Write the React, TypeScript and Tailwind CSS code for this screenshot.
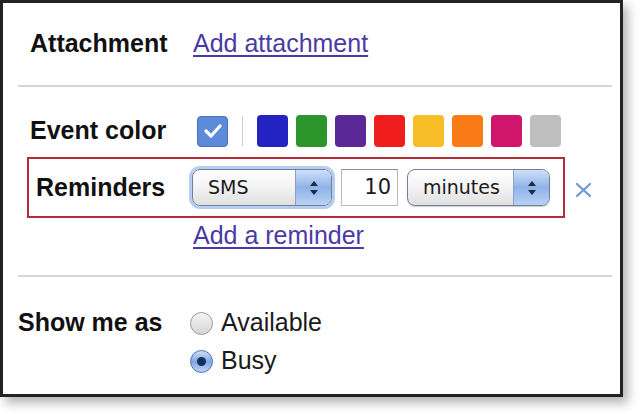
import React from 'react';

const swatches = ['#2323c2', '#2c962c', '#5c2797', '#ef1d1d', '#f8be28', '#f87b15', '#d0156d', '#bfbfbf'];

const Arrows: React.FC = () => (
  <svg width="10" height="16" viewBox="0 0 10 16">
    <path d="M5 1 L9 6 H1 Z" fill="#1c2a44" />
    <path d="M5 15 L9 10 H1 Z" fill="#1c2a44" />
  </svg>
);

const MacSelect: React.FC<{ label: string; width: string; focused?: boolean }> = ({ label, width, focused }) => (
  <div
    className={`${width} h-[37px] flex rounded-[8px] border border-[#6f7f9c] overflow-hidden bg-gradient-to-b from-white via-[#f3f3f3] to-[#e0e0e0] ${
      focused ? 'shadow-[0_0_0_3px_#b4cdf0]' : 'shadow-[0_1px_1px_rgba(0,0,0,0.2)]'
    }`}
  >
    <div className="flex-1 flex items-center pl-[15px] text-[19px] text-[#1a1a1a] font-['DejaVu_Sans',sans-serif]">{label}</div>
    <div className="w-[36px] flex items-center justify-center bg-gradient-to-b from-[#cfe0f8] via-[#8fb3e8] to-[#b9d2f5] border-l border-[#8aa0c4]">
      <Arrows />
    </div>
  </div>
);

const Radio: React.FC<{ checked?: boolean; label: string }> = ({ checked, label }) => (
  <div className="h-[38px] flex items-center gap-[8px]">
    {checked ? (
      <div className="w-[23px] h-[23px] rounded-full border border-[#4f74ad] bg-gradient-to-b from-[#cfe0f8] via-[#7ea7e2] to-[#bcd4f5] flex items-center justify-center">
        <div className="w-[9px] h-[9px] rounded-full bg-[#17305a]" />
      </div>
    ) : (
      <div className="w-[23px] h-[23px] rounded-full border border-[#9a9a9a] bg-gradient-to-b from-[#f4f4f4] to-[#d6d6d6]" />
    )}
    <span className="text-[25px] text-[#1a1a1a]">{label}</span>
  </div>
);

export default function App() {
  return (
    <div className="w-[640px] h-[414px] bg-white font-['Liberation_Sans',Arial,sans-serif] overflow-hidden">
      <div className="w-[623px] h-[397px] border-[3px] border-[#232323] bg-white shadow-[5px_6px_10px_rgba(0,0,0,0.3)] flex flex-col">
        <div className="h-[82px] flex items-center pl-[27px]">
          <span className="w-[163px] text-[25px] font-bold text-[#111]">Attachment</span>
          <a className="text-[25px] text-[#4b3aa6] underline underline-offset-[3px]">Add attachment</a>
        </div>
        <div className="h-[2px] bg-[#d6d6d6] ml-[15px] mr-[8px]" />

        <div className="h-[70px] pt-[18px] flex items-center pl-[27px]">
          <span className="w-[167px] text-[25px] font-bold text-[#111]">Event color</span>
          <div className="w-[31px] h-[31px] rounded-[4px] bg-[#5d8bd9] border border-[#4a72bb] flex items-center justify-center">
            <svg width="20" height="16" viewBox="0 0 20 16">
              <path d="M3 8 L8 13 L17 3" stroke="white" strokeWidth="3.2" fill="none" strokeLinecap="round" strokeLinejoin="round" />
            </svg>
          </div>
          <div className="w-px h-[30px] bg-[#cfcfcf] mx-[14px]" />
          <div className="flex gap-[8px]">
            {swatches.map((c) => (
              <div key={c} className="w-[31px] h-[32px] rounded-[4px]" style={{ backgroundColor: c }} />
            ))}
          </div>
        </div>

        <div className="flex items-center ml-[24px]">
          <div className="w-[538px] h-[61px] border-2 border-[#b92a38] flex items-center pl-[7px]">
            <span className="w-[156px] text-[25px] font-bold text-[#111]">Reminders</span>
            <MacSelect label="SMS" width="w-[140px]" focused />
            <div className="ml-[9px] w-[57px] h-[37px] border border-[#b9b9b9] border-t-[#8e8e8e] bg-white flex items-center justify-end pr-[6px] text-[21px] text-[#1a1a1a] font-['DejaVu_Sans',sans-serif]">
              10
            </div>
            <div className="ml-[9px]">
              <MacSelect label="minutes" width="w-[143px]" />
            </div>
          </div>
          <svg className="ml-[10px] mt-[5px]" width="17" height="16" viewBox="0 0 17 16">
            <path d="M2 2 L15 14 M15 2 L2 14" stroke="#6d97cf" strokeWidth="2.2" strokeLinecap="round" />
          </svg>
        </div>

        <div className="h-[36px] flex items-center pl-[190px]">
          <a className="text-[25px] text-[#4b3aa6] underline underline-offset-[3px]">Add a reminder</a>
        </div>

        <div className="h-[2px] bg-[#d6d6d6] ml-[15px] mr-[8px] mt-[21px]" />

        <div className="flex pl-[15px] mt-[27px]">
          <span className="w-[172px] h-[38px] flex items-center text-[25px] font-bold text-[#111]">Show me as</span>
          <div className="flex flex-col">
            <Radio label="Available" />
            <Radio label="Busy" checked />
          </div>
        </div>
      </div>
    </div>
  );
}
